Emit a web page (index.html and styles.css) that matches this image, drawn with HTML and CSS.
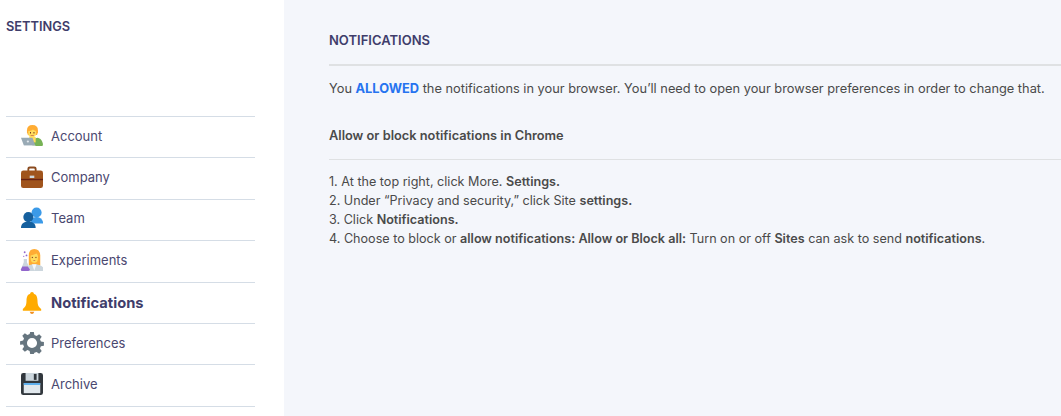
FILE: index.html
```html
<!DOCTYPE html>
<html>
<head>
  <title>Settings</title>
  <link rel="stylesheet" href="styles.css">
</head>
<body>
  <!-- Sidebar -->
  <div class="sidebar">
    <div class="sidebar-title">SETTINGS</div>
    <div class="menu">
      <div class="menu-item">
        <svg class="menu-icon" viewBox="0 0 24 24">
          <path d="M12 22c0-5 3-8 6-8s6 4 6 8l-1 1H13z" fill="#77b255"/>
          <path d="M9 13h7v6H9z" fill="#ffdc5d"/>
          <path d="M6.500 8V6q0-6 6-6t6 6v2l-1 3H7.500z" fill="#ffac33"/>
          <path d="M8 6.500q3 .5 5-1.500 1.500 1.500 3.500 1.500V9q0 4.500-4.500 4.500T8 9z" fill="#ffdc5d"/>
          <rect x="9.800" y="7.800" width="1.100" height="1.400" fill="#662113"/>
          <rect x="13.600" y="7.800" width="1.100" height="1.400" fill="#662113"/>
          <rect x="10.500" y="11" width="3.500" height=".8" fill="#c1694f"/>
          <path d="M0 14h12.500l3 8H3z" fill="#99aab5"/>
          <path d="M3 22h12.500l.5 1H3.500z" fill="#ccd6dd"/>
          <circle cx="7.500" cy="18" r="1.200" fill="#e1e8ed"/>
        </svg>
        <span>Account</span>
      </div>
      <div class="menu-item">
        <svg class="menu-icon" viewBox="0 0 24 24">
          <path d="M7 6V3Q7 .5 9.500 .5h5Q17 .5 17 3v3h-2V3.500q0-.8-.8-.8H9.800q-.8 0-.8.8V6z" fill="#8a4b1f"/>
          <rect x="0" y="5" width="24" height="19" rx="2.500" fill="#a0541c"/>
          <path d="M0 14h24v1.500H0z" fill="#662113"/>
          <rect x="9.500" y="10.500" width="5" height="2.600" fill="#ccd6dd"/>
        </svg>
        <span>Company</span>
      </div>
      <div class="menu-item">
        <svg class="menu-icon" viewBox="0 0 24 24">
          <circle cx="17" cy="6" r="5.500" fill="#3b9ae8"/>
          <path d="M11 15c1-3 3-4 6-4s6 2 7 5v2H11z" fill="#3b9ae8"/>
          <circle cx="8" cy="11" r="5.500" fill="#15609e"/>
          <path d="M0 23c0-5 3-7 8-7s8 2 8 7z" fill="#15609e"/>
        </svg>
        <span>Team</span>
      </div>
      <div class="menu-item">
        <svg class="menu-icon" viewBox="0 0 24 24">
          <path d="M8.500 18V7q0-7 6-7t6.500 7v11z" fill="#ffac33"/>
          <path d="M8 24v-4q0-3.500 6.500-3.500T24 20v4z" fill="#ccd6dd"/>
          <path d="M12 16.500h5l-2.500 7z" fill="#f5f8fa"/>
          <path d="M10.500 7q3 0 6.500-2 1.500 1.500 1.500 3v2q0 5-4 5t-4-5z" fill="#ffdc5d"/>
          <rect x="11.800" y="8.600" width="1" height="1.300" fill="#662113"/>
          <rect x="15.800" y="8.600" width="1" height="1.300" fill="#662113"/>
          <rect x="13.500" y="12" width="2" height=".8" fill="#c1694f"/>
          <path d="M3 11h3.500v3.500L10 22q0 2-2 2H1.500q-2 0-1.500-2l3-7.500z" fill="#ccd6dd"/>
          <path d="M1.500 19h6l2 3q0 2-2 2H1.500q-2 0-1.500-2z" fill="#9266cc"/>
          <circle cx="4" cy="3.500" r="1" fill="#9266cc"/>
          <circle cx="6" cy="7" r="1" fill="#9266cc"/>
          <circle cx="3" cy="8" r=".7" fill="#9266cc"/>
        </svg>
        <span>Experiments</span>
      </div>
      <div class="menu-item active">
        <svg class="menu-icon" viewBox="0 0 24 24">
          <circle cx="12" cy="2" r="2" fill="#ffab00"/>
          <path d="M12 1.500c5 0 6 4 6 8 0 5 1.500 7 4 9v2H2v-2c2.500-2 4-4 4-9 0-4 1-8 6-8z" fill="#ffab00"/>
          <path d="M9.500 21.500h5q-.8 2.500-2.500 2.500t-2.500-2.500z" fill="#f19020"/>
        </svg>
        <span>Notifications</span>
      </div>
      <div class="menu-item">
        <svg class="menu-icon" viewBox="0 0 24 24">
          <path fill-rule="evenodd" fill="#66757f" d="M10 0h4l.6 3.300 2.400 1 2.800-1.900 2.800 2.800-1.900 2.800 1 2.400 3.300.6v4l-3.300.6-1 2.400 1.900 2.800-2.800 2.800-2.800-1.900-2.400 1L14 24h-4l-.6-3.300-2.400-1-2.800 1.900-2.800-2.800 1.900-2.800-1-2.400L-1 14v-4l3.300-.6 1-2.400-1.900-2.800 2.800-2.800 2.800 1.900 2.400-1zM12 6.500a5.500 5.500 0 1 0 0 11 5.500 5.500 0 0 0 0-11z"/>
        </svg>
        <span>Preferences</span>
      </div>
      <div class="menu-item">
        <svg class="menu-icon" viewBox="0 0 24 24">
          <rect x="0" y="0" width="24" height="24" rx="2.500" fill="#31373d"/>
          <rect x="5" y="0" width="14" height="8.500" fill="#ccd6dd"/>
          <rect x="14" y="1" width="3" height="6.500" fill="#31373d"/>
          <rect x="3" y="11" width="18" height="11" fill="#e1e8ed"/>
          <rect x="3" y="11" width="18" height="2" fill="#55acee"/>
        </svg>
        <span>Archive</span>
      </div>
    </div>
  </div>

  <!-- Main content -->
  <div class="content">
    <div class="content-title">NOTIFICATIONS</div>
    <p class="status">You <b class="allowed">ALLOWED</b> the notifications in your browser. You’ll need to open your browser preferences in order to change that.</p>
    <div class="subtitle">Allow or block notifications in Chrome</div>
    <ol class="steps">
      <li>1. At the top right, click More. <b>Settings.</b></li>
      <li>2. Under “Privacy and security,” click Site <b>settings.</b></li>
      <li>3. Click <b>Notifications.</b></li>
      <li>4. Choose to block or <b>allow notifications: Allow or Block all:</b> Turn on or off <b>Sites</b> can ask to send <b>notifications</b>.</li>
    </ol>
  </div>
</body>
</html>
```

FILE: styles.css
```css
/* Base */
* {
  box-sizing: border-box;
}

html, body {
  margin: 0;
  padding: 0;
  height: 100%;
  overflow: hidden;
}

body {
  display: flex;
  font-family: 'Inter', 'Liberation Sans', sans-serif;
  font-size: 12.8px;
  color: #4a4a4a;
  background: #fff;
}

/* Sidebar */
.sidebar {
  width: 284px;
  flex-shrink: 0;
  padding: 20px 29px 0 6px;
}

.sidebar-title {
  font-size: 12.8px;
  font-weight: 600;
  line-height: 14px;
  color: #3f3d6b;
}

.menu {
  margin-top: 82px;
  border-top: 1px solid #d5dde6;
}

.menu-item {
  display: flex;
  align-items: center;
  gap: 8px;
  height: 41.4px;
  padding: 0 0 3px 15px;
  border-bottom: 1px solid #d5dde6;
  font-size: 13px;
  color: #4a4870;
}

.menu-icon {
  width: 22px;
  height: 22px;
  flex-shrink: 0;
  overflow: visible;
}

.menu-item.active {
  padding-bottom: 0;
  font-size: 14.7px;
  font-weight: 700;
  color: #3f3d6b;
}

/* Content */
.content {
  flex: 1;
  min-width: 0;
  padding: 33px 0 0 45px;
  background: #f4f6fb;
}

.content-title {
  font-size: 13px;
  font-weight: 600;
  line-height: 15px;
  color: #3f3d6b;
  padding-bottom: 16px;
  border-bottom: 2px solid #dfe1e3;
}

.status {
  margin: 14px 0 0;
  line-height: 18px;
  white-space: nowrap;
}

.allowed {
  color: #2673f0;
}

.subtitle {
  margin-top: 29px;
  padding-bottom: 14px;
  line-height: 18px;
  font-weight: 600;
  border-bottom: 1px solid #dfe1e3;
}

.steps {
  margin: 12px 0 0;
  padding: 0;
  list-style: none;
  font-size: 12.6px;
  line-height: 19px;
}

.steps b {
  font-weight: 600;
}
```
